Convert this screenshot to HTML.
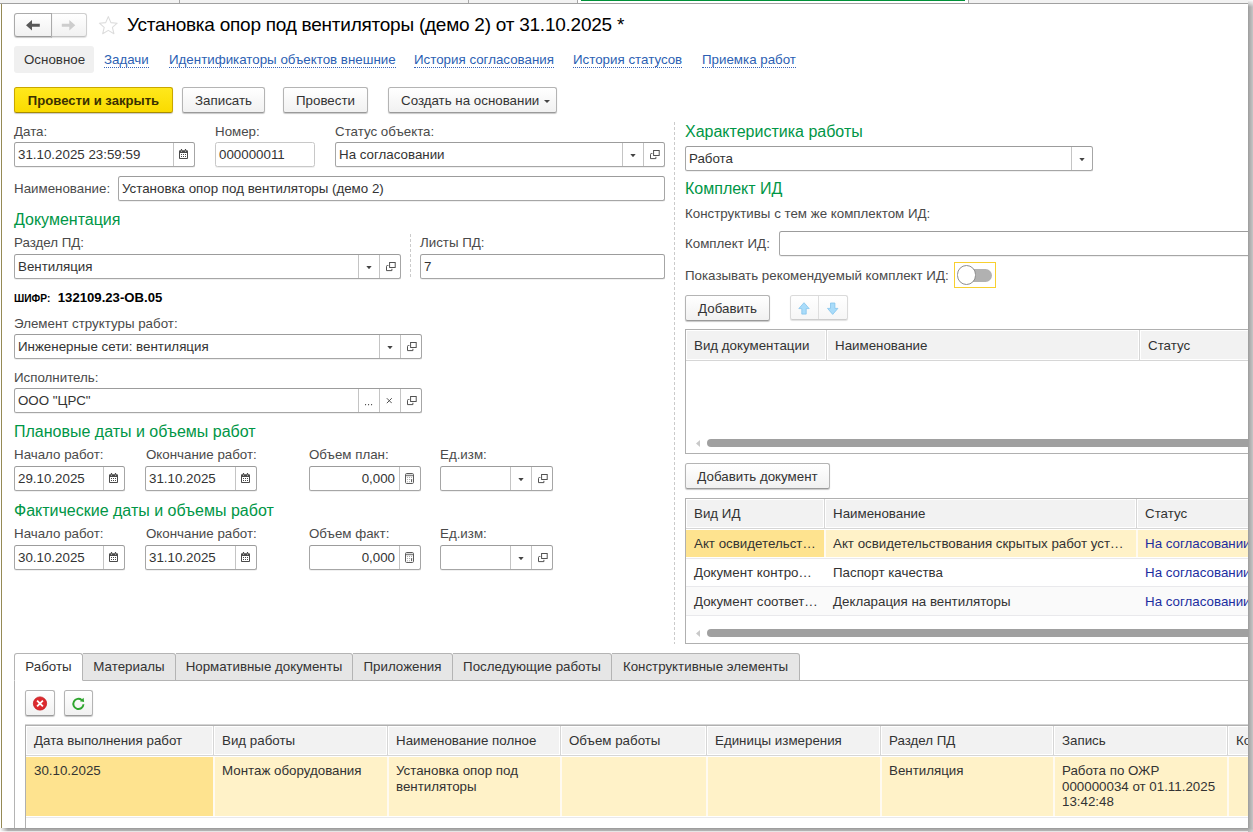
<!DOCTYPE html>
<html lang="ru">
<head>
<meta charset="utf-8">
<title>Установка опор под вентиляторы (демо 2)</title>
<style>
*{box-sizing:border-box;margin:0;padding:0}
html,body{width:1253px;height:832px;overflow:hidden;background:#fff}
body{font-family:"Liberation Sans",sans-serif;font-size:13.33px;color:#333;position:relative}
.a{position:absolute;white-space:nowrap}
#win{position:absolute;left:0;top:0;width:1248px;height:828px;background:#fff;overflow:hidden}
#strip{left:0;top:0;width:1248px;height:4px;background:#f2f2f2;border-bottom:1px solid #a0a0a0}
.vs{top:0;width:1px;height:3px;background:#a8a8a8}
#lb{left:1px;top:4px;width:1px;height:824px;background:#958a55}
.lbl{color:#4a4a4a;line-height:15px}
.h{color:#009646;font-size:16px;line-height:18px;letter-spacing:0}
.in{border:1px solid #a6a6a6;border-top-color:#9c9c9c;border-radius:2.5px;background:#fff;height:25px;line-height:23px;padding-left:3px;color:#333;overflow:hidden;box-shadow:0 1px 0 rgba(0,0,0,.06)}
.in i{position:absolute;top:0;width:1px;height:23px;background:#c4c4c4}
.in svg{position:absolute}
.btn{border:1px solid #b4b4b4;border-bottom-color:#9a9a9a;border-radius:2.5px;height:26px;line-height:25px;text-align:center;color:#333;background:linear-gradient(#fff,#f1f1f1);box-shadow:0 1px 1px rgba(0,0,0,.22)}
.link{color:#2c5fb3;line-height:15px;border-bottom:1px dotted #3a66ba;padding-bottom:0}
.th{color:#333;line-height:15px}
.tbl{border:1px solid #b0b0b0;background:#fff;overflow:hidden}
.hd{background:#f2f2f2}
.hl{height:1px;background:#d6d6d6}
.rl{height:1px;background:#e9e9ec}
.cd{width:3px;background:linear-gradient(90deg,#fff 1px,#d6d6d6 1px,#d6d6d6 2px,#fff 2px)}
.wd{width:2px;background:#fffaf0}
.dv{width:1px;background:repeating-linear-gradient(180deg,#cbcbcb 0,#cbcbcb 3px,transparent 3px,transparent 5px)}
.sb{height:7.6px;border-radius:4px;background:#a0a0a0}
.tab{top:653px;height:28px;line-height:26px;background:#e6e6e6;border:1px solid #b4b4b4;border-left:none;text-align:center;color:#333;border-radius:0 3px 0 0}
</style>
</head>
<body>
<div id="win">
<div id="strip" class="a"></div>
<div class="a vs" style="left:179px"></div>
<div class="a vs" style="left:468px"></div>
<div class="a vs" style="left:577px"></div>
<div class="a" style="left:578px;top:0;width:390px;height:3px;background:#fff"></div>
<div class="a" style="left:581px;top:0;width:384px;height:1px;background:#009138"></div>
<div class="a vs" style="left:968px"></div>
<div id="lb" class="a"></div>

<!-- HEADER -->
<div class="a btn" style="left:51px;top:13px;width:36px;height:24px;border-color:#cfcfcf;border-bottom-color:#c2c2c2;border-radius:0 3px 3px 0;box-shadow:0 1px 1px rgba(0,0,0,.12)"></div>
<div class="a btn" style="left:14px;top:13px;width:38px;height:24px;border-color:#aaa;border-bottom-color:#999;border-radius:3px 0 0 3px"></div>
<svg class="a" style="left:24px;top:18px" width="18" height="14" viewBox="24 18 18 14"><path d="M26 25.2L32 20V23.7H39.8V26.7H32V30.5Z" fill="#585858"/></svg>
<svg class="a" style="left:60px;top:18px" width="18" height="14" viewBox="60 18 18 14"><path d="M75.3 25.2L69.3 20V23.7H61.8V26.7H69.3V30.5Z" fill="#cdcdcd"/></svg>
<svg class="a" style="left:98px;top:15px" width="21" height="21" viewBox="98 15 21 21"><path d="M108.3 16.6L110.9 22.6L117.2 23.2L112.4 27.4L113.9 33.7L108.3 30.4L102.7 33.7L104.2 27.4L99.4 23.2L105.7 22.6Z" fill="#fff" stroke="#dcdcdc" stroke-width="1.1" stroke-linejoin="round"/></svg>
<div class="a" id="title" style="left:127px;top:13px;font-size:19px;line-height:24px;color:#000;letter-spacing:-.24px">Установка опор под вентиляторы (демо 2) от 31.10.2025 *</div>

<!-- NAV -->
<div class="a" style="left:14px;top:46px;width:80px;height:27px;background:#f0f0f0;border-radius:3px"></div>
<div class="a" style="left:24px;top:52px;line-height:15px;color:#333">Основное</div>
<div class="a link" style="left:104px;top:52px">Задачи</div>
<div class="a link" style="left:169px;top:52px">Идентификаторы объектов внешние</div>
<div class="a link" style="left:414px;top:52px">История согласования</div>
<div class="a link" style="left:573px;top:52px">История статусов</div>
<div class="a link" style="left:702px;top:52px">Приемка работ</div>

<!-- COMMAND BAR -->
<div class="a btn" style="left:14px;top:87px;width:159px;background:linear-gradient(#ffe81c,#fadb00);border-color:#c9a700;border-bottom-color:#a88c00;font-weight:bold;font-size:13.1px;color:#3a3000">Провести и закрыть</div>
<div class="a btn" style="left:182px;top:87px;width:83px">Записать</div>
<div class="a btn" style="left:283px;top:87px;width:85px">Провести</div>
<div class="a btn" style="left:388px;top:87px;width:169px;text-align:left;padding-left:12px">Создать на основании</div>
<svg class="a" style="left:544px;top:100px" width="6" height="3" viewBox="0 0 6 3"><path d="M0 0H6L3 3Z" fill="#444"/></svg>

<!-- ROW 1 -->
<div class="a lbl" style="left:14px;top:124px">Дата:</div>
<div class="a lbl" style="left:215px;top:124px">Номер:</div>
<div class="a lbl" style="left:335px;top:124px">Статус объекта:</div>
<div class="a in" style="left:14px;top:142px;width:181px">31.10.2025 23:59:59<i style="left:158px"></i><svg class="a" style="left:164px;top:6px" width="9" height="10" viewBox="0 0 9 10"><rect x="0" y="1.3" width="9" height="8.7" rx="0.9" fill="#4a4a4a"/><rect x="1" y="4" width="7" height="5" fill="#fff"/><path d="M2 5.5h1M4 5.5h1M6 5.5h1M2 7.5h1M4 7.5h1M6 7.5h1" stroke="#4a4a4a" stroke-width="1"/><path d="M2.5 0v2.6M6.5 0v2.6" stroke="#4a4a4a" stroke-width="1.2"/><path d="M2.5 1.6v1.4M6.5 1.6v1.4" stroke="#fff" stroke-width="0.5"/></svg></div>
<div class="a in" style="left:215px;top:142px;width:100px;border-color:#c8c8c8">000000011</div>
<div class="a in" style="left:335px;top:142px;width:330px">На согласовании<i style="left:286px"></i><i style="left:307px"></i><svg class="a" style="left:294px;top:11px" width="6" height="3" viewBox="0 0 6 3"><path d="M0.3 0H5.7L3 3.2Z" fill="#444"/></svg><svg class="a" style="left:314px;top:7px" width="10" height="10" viewBox="0 0 10 10"><rect x="3.6" y="0.5" width="5.6" height="5" fill="none" stroke="#4a4a4a" stroke-width=".95"/><path d="M2.4 3.5H1.4Q0.5 3.5 0.5 4.4V8.6H5.9V6.8" fill="none" stroke="#4a4a4a" stroke-width=".95"/></svg></div>

<div class="a lbl" style="left:14px;top:181px">Наименование:</div>
<div class="a in" style="left:118px;top:176px;width:547px">Установка опор под вентиляторы (демо 2)</div>

<!-- ДОКУМЕНТАЦИЯ -->
<div class="a h" style="left:14px;top:211px">Документация</div>
<div class="a lbl" style="left:14px;top:235px">Раздел ПД:</div>
<div class="a in" style="left:14px;top:254px;width:387px">Вентиляция<i style="left:343px"></i><i style="left:364px"></i><svg class="a" style="left:351px;top:11px" width="6" height="3" viewBox="0 0 6 3"><path d="M0.3 0H5.7L3 3.2Z" fill="#444"/></svg><svg class="a" style="left:371px;top:7px" width="10" height="10" viewBox="0 0 10 10"><rect x="3.6" y="0.5" width="5.6" height="5" fill="none" stroke="#4a4a4a" stroke-width=".95"/><path d="M2.4 3.5H1.4Q0.5 3.5 0.5 4.4V8.6H5.9V6.8" fill="none" stroke="#4a4a4a" stroke-width=".95"/></svg></div>
<div class="a dv" style="left:410px;top:234px;height:45px"></div>
<div class="a lbl" style="left:420px;top:235px">Листы ПД:</div>
<div class="a in" style="left:420px;top:254px;width:245px">7</div>

<div class="a" style="left:14px;top:290px;line-height:15px;color:#000;font-weight:bold"><span style="font-size:10.2px">ШИФР:</span><span style="margin-left:7.5px;font-size:13.15px">132109.23-ОВ.05</span></div>

<div class="a lbl" style="left:14px;top:316px">Элемент структуры работ:</div>
<div class="a in" style="left:14px;top:334px;width:408px">Инженерные сети: вентиляция<i style="left:364px"></i><i style="left:385px"></i><svg class="a" style="left:372px;top:11px" width="6" height="3" viewBox="0 0 6 3"><path d="M0.3 0H5.7L3 3.2Z" fill="#444"/></svg><svg class="a" style="left:392px;top:7px" width="10" height="10" viewBox="0 0 10 10"><rect x="3.6" y="0.5" width="5.6" height="5" fill="none" stroke="#4a4a4a" stroke-width=".95"/><path d="M2.4 3.5H1.4Q0.5 3.5 0.5 4.4V8.6H5.9V6.8" fill="none" stroke="#4a4a4a" stroke-width=".95"/></svg></div>
<div class="a lbl" style="left:14px;top:370px">Исполнитель:</div>
<div class="a in" style="left:14px;top:388px;width:408px">ООО "ЦРС"<i style="left:343px"></i><i style="left:364px"></i><i style="left:385px"></i><svg class="a" style="left:350px;top:15px" width="8" height="2" viewBox="0 0 8 2"><path d="M0 .6h1.1M3 .6h1.1M6 .6h1.1" stroke="#555" stroke-width="1.1"/></svg><svg class="a" style="left:371px;top:9px" width="6" height="6" viewBox="0 0 6 6"><path d="M0.8 0.2L5.8 5.2M5.8 0.2L0.8 5.2" stroke="#505050" stroke-width="1"/></svg><svg class="a" style="left:392px;top:7px" width="10" height="10" viewBox="0 0 10 10"><rect x="3.6" y="0.5" width="5.6" height="5" fill="none" stroke="#4a4a4a" stroke-width=".95"/><path d="M2.4 3.5H1.4Q0.5 3.5 0.5 4.4V8.6H5.9V6.8" fill="none" stroke="#4a4a4a" stroke-width=".95"/></svg></div>

<!-- ПЛАНОВЫЕ -->
<div class="a h" style="left:14px;top:423px">Плановые даты и объемы работ</div>
<div class="a lbl" style="left:14px;top:447px">Начало работ:</div>
<div class="a lbl" style="left:146px;top:447px">Окончание работ:</div>
<div class="a lbl" style="left:309px;top:447px">Объем план:</div>
<div class="a lbl" style="left:440px;top:447px">Ед.изм:</div>
<div class="a in" style="left:14px;top:466px;width:111px">29.10.2025<i style="left:88px"></i><svg class="a" style="left:94px;top:6px" width="9" height="10" viewBox="0 0 9 10"><rect x="0" y="1.3" width="9" height="8.7" rx="0.9" fill="#4a4a4a"/><rect x="1" y="4" width="7" height="5" fill="#fff"/><path d="M2 5.5h1M4 5.5h1M6 5.5h1M2 7.5h1M4 7.5h1M6 7.5h1" stroke="#4a4a4a" stroke-width="1"/><path d="M2.5 0v2.6M6.5 0v2.6" stroke="#4a4a4a" stroke-width="1.2"/><path d="M2.5 1.6v1.4M6.5 1.6v1.4" stroke="#fff" stroke-width="0.5"/></svg></div>
<div class="a in" style="left:145px;top:466px;width:112px">31.10.2025<i style="left:89px"></i><svg class="a" style="left:95px;top:6px" width="9" height="10" viewBox="0 0 9 10"><rect x="0" y="1.3" width="9" height="8.7" rx="0.9" fill="#4a4a4a"/><rect x="1" y="4" width="7" height="5" fill="#fff"/><path d="M2 5.5h1M4 5.5h1M6 5.5h1M2 7.5h1M4 7.5h1M6 7.5h1" stroke="#4a4a4a" stroke-width="1"/><path d="M2.5 0v2.6M6.5 0v2.6" stroke="#4a4a4a" stroke-width="1.2"/><path d="M2.5 1.6v1.4M6.5 1.6v1.4" stroke="#fff" stroke-width="0.5"/></svg></div>
<div class="a in" style="left:309px;top:466px;width:112px"><span class="a" style="right:25px;top:0">0,000</span><i style="left:89px"></i><svg class="a" style="left:95px;top:6px" width="9" height="11" viewBox="0 0 9 11"><rect x="0.5" y="0.5" width="8" height="10" rx="1.2" fill="#fff" stroke="#5c5c5c"/><rect x="1" y="1.1" width="7" height="1" fill="#d8d8d8"/><path d="M1 2.7H8" stroke="#5c5c5c" stroke-width=".9"/><g fill="#909090"><circle cx="2.4" cy="4.5" r=".5"/><circle cx="4.5" cy="4.5" r=".5"/><circle cx="6.6" cy="4.5" r=".5"/><circle cx="2.4" cy="6.6" r=".5"/><circle cx="4.5" cy="6.6" r=".5"/><circle cx="2.4" cy="8.7" r=".5"/><circle cx="4.5" cy="8.7" r=".5"/></g><rect x="6.1" y="6" width="1" height="3.2" rx=".4" fill="#555"/></svg></div>
<div class="a in" style="left:440px;top:466px;width:113px"><i style="left:69px"></i><i style="left:90px"></i><svg class="a" style="left:77px;top:11px" width="6" height="3" viewBox="0 0 6 3"><path d="M0.3 0H5.7L3 3.2Z" fill="#444"/></svg><svg class="a" style="left:97px;top:7px" width="10" height="10" viewBox="0 0 10 10"><rect x="3.6" y="0.5" width="5.6" height="5" fill="none" stroke="#4a4a4a" stroke-width=".95"/><path d="M2.4 3.5H1.4Q0.5 3.5 0.5 4.4V8.6H5.9V6.8" fill="none" stroke="#4a4a4a" stroke-width=".95"/></svg></div>

<!-- ФАКТИЧЕСКИЕ -->
<div class="a h" style="left:14px;top:502px">Фактические даты и объемы работ</div>
<div class="a lbl" style="left:14px;top:526px">Начало работ:</div>
<div class="a lbl" style="left:146px;top:526px">Окончание работ:</div>
<div class="a lbl" style="left:309px;top:526px">Объем факт:</div>
<div class="a lbl" style="left:440px;top:526px">Ед.изм:</div>
<div class="a in" style="left:14px;top:545px;width:111px">30.10.2025<i style="left:88px"></i><svg class="a" style="left:94px;top:6px" width="9" height="10" viewBox="0 0 9 10"><rect x="0" y="1.3" width="9" height="8.7" rx="0.9" fill="#4a4a4a"/><rect x="1" y="4" width="7" height="5" fill="#fff"/><path d="M2 5.5h1M4 5.5h1M6 5.5h1M2 7.5h1M4 7.5h1M6 7.5h1" stroke="#4a4a4a" stroke-width="1"/><path d="M2.5 0v2.6M6.5 0v2.6" stroke="#4a4a4a" stroke-width="1.2"/><path d="M2.5 1.6v1.4M6.5 1.6v1.4" stroke="#fff" stroke-width="0.5"/></svg></div>
<div class="a in" style="left:145px;top:545px;width:112px">31.10.2025<i style="left:89px"></i><svg class="a" style="left:95px;top:6px" width="9" height="10" viewBox="0 0 9 10"><rect x="0" y="1.3" width="9" height="8.7" rx="0.9" fill="#4a4a4a"/><rect x="1" y="4" width="7" height="5" fill="#fff"/><path d="M2 5.5h1M4 5.5h1M6 5.5h1M2 7.5h1M4 7.5h1M6 7.5h1" stroke="#4a4a4a" stroke-width="1"/><path d="M2.5 0v2.6M6.5 0v2.6" stroke="#4a4a4a" stroke-width="1.2"/><path d="M2.5 1.6v1.4M6.5 1.6v1.4" stroke="#fff" stroke-width="0.5"/></svg></div>
<div class="a in" style="left:309px;top:545px;width:112px"><span class="a" style="right:25px;top:0">0,000</span><i style="left:89px"></i><svg class="a" style="left:95px;top:6px" width="9" height="11" viewBox="0 0 9 11"><rect x="0.5" y="0.5" width="8" height="10" rx="1.2" fill="#fff" stroke="#5c5c5c"/><rect x="1" y="1.1" width="7" height="1" fill="#d8d8d8"/><path d="M1 2.7H8" stroke="#5c5c5c" stroke-width=".9"/><g fill="#909090"><circle cx="2.4" cy="4.5" r=".5"/><circle cx="4.5" cy="4.5" r=".5"/><circle cx="6.6" cy="4.5" r=".5"/><circle cx="2.4" cy="6.6" r=".5"/><circle cx="4.5" cy="6.6" r=".5"/><circle cx="2.4" cy="8.7" r=".5"/><circle cx="4.5" cy="8.7" r=".5"/></g><rect x="6.1" y="6" width="1" height="3.2" rx=".4" fill="#555"/></svg></div>
<div class="a in" style="left:440px;top:545px;width:113px"><i style="left:69px"></i><i style="left:90px"></i><svg class="a" style="left:77px;top:11px" width="6" height="3" viewBox="0 0 6 3"><path d="M0.3 0H5.7L3 3.2Z" fill="#444"/></svg><svg class="a" style="left:97px;top:7px" width="10" height="10" viewBox="0 0 10 10"><rect x="3.6" y="0.5" width="5.6" height="5" fill="none" stroke="#4a4a4a" stroke-width=".95"/><path d="M2.4 3.5H1.4Q0.5 3.5 0.5 4.4V8.6H5.9V6.8" fill="none" stroke="#4a4a4a" stroke-width=".95"/></svg></div>

<!-- RIGHT PANEL -->
<div class="a dv" style="left:674px;top:122px;height:522px"></div>
<div class="a h" style="left:685px;top:123px">Характеристика работы</div>
<div class="a in" style="left:685px;top:146px;width:408px">Работа<i style="left:385px"></i><svg class="a" style="left:393px;top:11px" width="6" height="3" viewBox="0 0 6 3"><path d="M0.3 0H5.7L3 3.2Z" fill="#444"/></svg></div>
<div class="a h" style="left:685px;top:180px">Комплект ИД</div>
<div class="a lbl" style="left:685px;top:206px">Конструктивы с тем же комплектом ИД:</div>
<div class="a lbl" style="left:685px;top:236px">Комплект ИД:</div>
<div class="a in" style="left:779px;top:231px;width:480px"></div>
<div class="a lbl" style="left:685px;top:268px">Показывать рекомендуемый комплект ИД:</div>
<div class="a" style="left:954px;top:262px;width:42px;height:26px;border:1px solid #f8d030"></div>
<div class="a" style="left:966px;top:269px;width:26px;height:12.5px;border-radius:6.5px;background:#b1b1b1"></div>
<div class="a" style="left:956.8px;top:265px;width:19.6px;height:19.6px;border-radius:50%;background:#fff;border:1.2px solid #8e8e8e"></div>

<div class="a btn" style="left:685px;top:295px;width:85px">Добавить</div>
<div class="a btn" style="left:790px;top:295px;width:58px;height:25px;border-color:#dadada;border-bottom-color:#cdcdcd;background:linear-gradient(#fff,#f6f6f6);box-shadow:0 1px 1px rgba(0,0,0,.12)"></div>
<div class="a" style="left:818px;top:296px;width:1px;height:23px;background:#dedede"></div>
<svg class="a" style="left:796px;top:300px" width="16" height="17" viewBox="796 300 16 17"><path d="M804 302.7L809.2 308.6H806.2V314.1H801.8V308.6H798.8Z" fill="#a9dcfa" stroke="#84c4ec" stroke-width=".8" stroke-linejoin="round"/></svg>
<svg class="a" style="left:825px;top:300px" width="16" height="17" viewBox="825 300 16 17"><path d="M832.7 314.4L837.9 308.4H834.9V303H830.5V308.4H827.5Z" fill="#a9dcfa" stroke="#84c4ec" stroke-width=".8" stroke-linejoin="round"/></svg>

<!-- TABLE 1 -->
<div class="a tbl" style="left:685px;top:329px;width:600px;height:125px">
 <div class="a hd" style="left:1px;top:1px;width:600px;height:28px"></div>
 <div class="a cd" style="left:139px;top:0;height:30px"></div>
 <div class="a cd" style="left:452px;top:0;height:30px"></div>
 <div class="a hl" style="left:0;top:30px;width:600px"></div>
 <div class="a th" style="left:8px;top:7.5px">Вид документации</div>
 <div class="a th" style="left:149px;top:7.5px">Наименование</div>
 <div class="a th" style="left:462px;top:7.5px">Статус</div>
 <svg class="a" style="left:10px;top:110px" width="4" height="7" viewBox="0 0 4 7"><path d="M4 0V7L0 3.5Z" fill="#c9c9c9"/></svg>
 <div class="a sb" style="left:21px;top:109.2px;width:600px"></div>
</div>

<div class="a btn" style="left:685px;top:463px;width:145px">Добавить документ</div>

<!-- TABLE 2 -->
<div class="a tbl" style="left:685px;top:498px;width:600px;height:146px">
 <div class="a hd" style="left:1px;top:1px;width:600px;height:27px"></div>
 <div class="a cd" style="left:137px;top:0;height:29px"></div>
 <div class="a cd" style="left:449px;top:0;height:29px"></div>
 <div class="a hl" style="left:0;top:29px;width:600px"></div>
 <div class="a th" style="left:8px;top:6.5px">Вид ИД</div>
 <div class="a th" style="left:147px;top:6.5px">Наименование</div>
 <div class="a th" style="left:459px;top:6.5px">Статус</div>
 <div class="a" style="left:0;top:31px;width:600px;height:27px;background:#fff2c8"></div>
 <div class="a" style="left:0;top:31px;width:138px;height:27px;background:#fee38f"></div>
 <div class="a wd" style="left:138px;top:31px;height:27px"></div>
 <div class="a wd" style="left:450px;top:31px;height:27px"></div>
 <div class="a rl" style="left:0;top:59px;width:600px"></div>
 <div class="a rl" style="left:0;top:87px;width:600px"></div>
 <div class="a" style="left:0;top:88px;width:600px;height:28px;background:#fafafa"></div>
 <div class="a rl" style="left:0;top:116px;width:600px"></div>
 <div class="a th" style="left:8px;top:37px">Акт освидетельст<span style="letter-spacing:.6px;margin-left:.5px">...</span></div>
 <div class="a th" style="left:147px;top:37px">Акт освидетельствования скрытых работ уст<span style="letter-spacing:.6px;margin-left:.5px">...</span></div>
 <div class="a th" style="left:459px;top:37px;color:#1c2ea0">На согласовании</div>
 <div class="a th" style="left:8px;top:66px">Документ контро<span style="letter-spacing:.6px;margin-left:.5px">...</span></div>
 <div class="a th" style="left:147px;top:66px">Паспорт качества</div>
 <div class="a th" style="left:459px;top:66px;color:#1c2ea0">На согласовании</div>
 <div class="a th" style="left:8px;top:95px">Документ соответ<span style="letter-spacing:.6px;margin-left:.5px">...</span></div>
 <div class="a th" style="left:147px;top:95px">Декларация на вентиляторы</div>
 <div class="a th" style="left:459px;top:95px;color:#1c2ea0">На согласовании</div>
 <svg class="a" style="left:10px;top:131px" width="4" height="7" viewBox="0 0 4 7"><path d="M4 0V7L0 3.5Z" fill="#c9c9c9"/></svg>
 <div class="a sb" style="left:21px;top:130.2px;width:600px"></div>
</div>

<!-- BOTTOM TABS -->
<div class="a" style="left:14px;top:680px;width:1240px;height:160px;border:1px solid #b4b4b4;border-right:none"></div>
<div class="a tab" style="left:14px;width:69px;background:#fff;border-left:1px solid #b4b4b4;border-bottom-color:#fff;border-radius:3px 3px 0 0">Работы</div>
<div class="a tab" style="left:83px;width:93px">Материалы</div>
<div class="a tab" style="left:176px;width:177px">Нормативные документы</div>
<div class="a tab" style="left:353px;width:100px">Приложения</div>
<div class="a tab" style="left:453px;width:159px">Последующие работы</div>
<div class="a tab" style="left:612px;width:188px">Конструктивные элементы</div>

<div class="a btn" style="left:25px;top:690px;width:30px"></div>
<div class="a btn" style="left:64px;top:690px;width:29px"></div>
<svg class="a" style="left:32px;top:695px" width="17" height="17" viewBox="32 695 17 17"><circle cx="40" cy="703.5" r="6.6" fill="#dc2a2e" stroke="#c4161c" stroke-width=".8"/><path d="M37.1 700.6L42.9 706.4M42.9 700.6L37.1 706.4" stroke="#fff" stroke-width="1.8"/></svg>
<svg class="a" style="left:70px;top:695px" width="18" height="18" viewBox="70 695 18 18"><path d="M81.7 700A5.1 5.1 0 1 0 83.5 704.3" fill="none" stroke="#2ea52e" stroke-width="1.9"/><path d="M84.1 701.9L83.6 697.7L79.9 701.2Z" fill="#2ea52e"/></svg>

<!-- TABLE 3 -->
<div class="a" style="left:25px;top:724px;width:1240px;height:1px;background:#d4d4d4"></div>
<div class="a tbl" style="left:25px;top:725px;width:1240px;height:120px">
 <div class="a hd" style="left:1px;top:1px;width:1240px;height:27px"></div>
 <div class="a cd" style="left:186px;top:0;height:29px"></div>
 <div class="a cd" style="left:360px;top:0;height:29px"></div>
 <div class="a cd" style="left:533px;top:0;height:29px"></div>
 <div class="a cd" style="left:679px;top:0;height:29px"></div>
 <div class="a cd" style="left:853px;top:0;height:29px"></div>
 <div class="a cd" style="left:1026px;top:0;height:29px"></div>
 <div class="a cd" style="left:1200px;top:0;height:29px"></div>
 <div class="a hl" style="left:0;top:29px;width:1240px"></div>
 <div class="a th" style="left:8px;top:6.5px">Дата выполнения работ</div>
 <div class="a th" style="left:196px;top:6.5px">Вид работы</div>
 <div class="a th" style="left:370px;top:6.5px">Наименование полное</div>
 <div class="a th" style="left:543px;top:6.5px">Объем работы</div>
 <div class="a th" style="left:689px;top:6.5px">Единицы измерения</div>
 <div class="a th" style="left:863px;top:6.5px">Раздел ПД</div>
 <div class="a th" style="left:1036px;top:6.5px">Запись</div>
 <div class="a th" style="left:1210px;top:6.5px">Конструктивный элемент</div>
 <div class="a" style="left:0;top:31px;width:1240px;height:59px;background:#fff2c8"></div>
 <div class="a" style="left:0;top:31px;width:187px;height:59px;background:#fee38f"></div>
 <div class="a wd" style="left:187px;top:31px;height:59px"></div>
 <div class="a wd" style="left:361px;top:31px;height:59px"></div>
 <div class="a wd" style="left:534px;top:31px;height:59px"></div>
 <div class="a wd" style="left:680px;top:31px;height:59px"></div>
 <div class="a wd" style="left:854px;top:31px;height:59px"></div>
 <div class="a wd" style="left:1027px;top:31px;height:59px"></div>
 <div class="a wd" style="left:1201px;top:31px;height:59px"></div>
 <div class="a rl" style="left:0;top:91px;width:1240px"></div>
 <div class="a th" style="left:8px;top:37px;line-height:15.7px">30.10.2025</div>
 <div class="a th" style="left:196px;top:37px;line-height:15.7px">Монтаж оборудования</div>
 <div class="a th" style="left:370px;top:37px;line-height:15.7px">Установка опор под<br>вентиляторы</div>
 <div class="a th" style="left:863px;top:37px;line-height:15.7px">Вентиляция</div>
 <div class="a th" style="left:1036px;top:37px;line-height:15.7px">Работа по ОЖР<br>000000034 от 01.11.2025<br>13:42:48</div>
</div>

</div>
<div class="a" style="left:1248px;top:0;width:5px;height:828px;background:linear-gradient(90deg,#9c9c9c,#a8a8a8 25%,#c6c6c6);-webkit-mask-image:linear-gradient(180deg,rgba(0,0,0,.05),#000 7px);mask-image:linear-gradient(180deg,rgba(0,0,0,.05),#000 7px)"></div>
<div class="a" style="left:0;top:828px;width:1253px;height:4px;background:linear-gradient(180deg,#9e9e9e 0,#9e9e9e 1px,#aaa 1px,#aaa 2px,#b2b2b2 2px,#b2b2b2 3px,#e6e6e6 3px);-webkit-mask-image:linear-gradient(90deg,rgba(0,0,0,.05),#000 8px);mask-image:linear-gradient(90deg,rgba(0,0,0,.05),#000 8px)"></div>
<div class="a" style="left:1248px;top:828px;width:5px;height:4px;background:linear-gradient(135deg,#a2a2a2,#c8c8c8 70%,#d8d8d8)"></div>
</body>
</html>
